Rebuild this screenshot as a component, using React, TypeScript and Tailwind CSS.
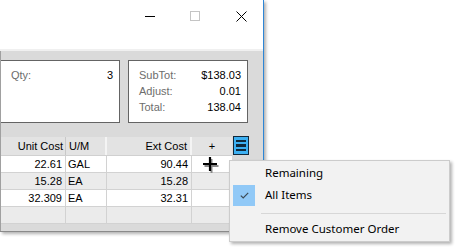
import React from 'react';

const rows = [
  { unit: '22.61', um: 'GAL', ext: '90.44', bg: 'bg-white' },
  { unit: '15.28', um: 'EA', ext: '15.28', bg: 'bg-[#ebebeb]' },
  { unit: '32.309', um: 'EA', ext: '32.31', bg: 'bg-white' },
  { unit: '', um: '', ext: '', bg: 'bg-[#ebebeb]' },
];

function TitleBar() {
  return (
    <div className="h-[49px] bg-white flex items-start">
      {/* minimize */}
      <div className="ml-[145px] mt-[16px] w-[10px] h-px bg-black" />
      {/* maximize (disabled) */}
      <div className="ml-[35px] mt-[11px] w-[10px] h-[10px] border border-[#c4c4c4]" />
      {/* close */}
      <svg className="ml-[36px] mt-[11px]" width="11" height="11" viewBox="0 0 11 11">
        <path d="M0.5 0.5 L10.5 10.5 M10.5 0.5 L0.5 10.5" stroke="#000" strokeWidth="1" />
      </svg>
    </div>
  );
}

function Grid() {
  return (
    <div className="flex items-start">
      <div className="w-[231px] text-[11px] text-black">
        {/* header */}
        <div className="flex h-[19px] bg-[#e3e3e3] border-b border-[#d0d0d0]">
          <div className="w-[65px] pr-[2px] flex items-center justify-end border-r border-[#c8c8c8]">Unit Cost</div>
          <div className="w-[41px] pl-[3px] flex items-center border-r-2 border-[#f4f4f4]">U/M</div>
          <div className="w-[85px] pr-[3px] flex items-center justify-end border-r-2 border-[#f4f4f4]">Ext Cost</div>
          <div className="w-[40px] flex items-center justify-center">+</div>
        </div>
        {rows.map((r, i) => (
          <div key={i} className={`flex h-[17px] border-b border-[#d2d2d2] ${r.bg}`}>
            <div className="w-[65px] pr-[3px] flex items-center justify-end border-r border-[#d2d2d2]">{r.unit}</div>
            <div className="w-[41px] pl-[2px] flex items-center border-r border-[#d2d2d2]">{r.um}</div>
            <div className="w-[85px] pr-[3px] flex items-center justify-end border-r border-[#d2d2d2]">{r.ext}</div>
            <div className="w-[40px]" />
          </div>
        ))}
      </div>
      {/* column chooser button */}
      <div className="ml-[1px] mt-[-1px] w-[16px] h-[19px] bg-[#3db0f2] border border-[#12283a] flex flex-col items-center justify-center gap-[2px]">
        <div className="w-[10px] h-[2.5px] bg-[#10293b]" />
        <div className="w-[10px] h-[2.5px] bg-[#10293b]" />
        <div className="w-[10px] h-[2.5px] bg-[#10293b]" />
      </div>
    </div>
  );
}

function ContextMenu() {
  return (
    <div
      className="absolute left-[229px] top-[160px] w-[221px] bg-[#f2f2f2] border border-[#cccccc] py-px px-px shadow-[2px_2px_3px_rgba(0,0,0,0.3)] text-[11.5px] text-black"
      style={{ fontFamily: '"Noto Sans", "Open Sans", sans-serif' }}
    >
      <div className="h-[22px] flex items-center pl-[34px]">Remaining</div>
      <div className="h-[22px] flex items-center">
        <div className="ml-[2px] w-[22px] h-[21px] bg-[#91c9f7] flex items-center justify-center">
          <svg width="9" height="7" viewBox="0 0 9 7">
            <path d="M0.8 3.6 L3.2 6 L8.2 0.8" fill="none" stroke="#3c4a55" strokeWidth="1.2" />
          </svg>
        </div>
        <span className="ml-[10px]">All Items</span>
      </div>
      <div className="h-[12px] pt-[7px] pl-[30px] pr-[2px]">
        <div className="h-px bg-[#d7d7d7]" />
      </div>
      <div className="h-[22px] flex items-center pl-[34px]">Remove Customer Order</div>
    </div>
  );
}

export default function App() {
  return (
    <div
      className="relative w-[457px] h-[250px] bg-white overflow-hidden"
      style={{ fontFamily: '"Liberation Sans", Arial, sans-serif' }}
    >
      <div className="w-[264px] h-[232px] border-r border-b border-r-[#2d86d6] border-b-[#8a8a8a] shadow-[2px_2px_3px_rgba(0,0,0,0.3)]">
        <TitleBar />
        <div className="h-[2px] bg-[#f0f0f0]" />
        <div className="h-[180px] bg-[#dadada] border-l border-[#a0a0a0] pt-[9px]">
          <div className="flex h-[63px]">
            <div className="w-[119px] bg-white border border-l-0 border-[#646464] pt-[8px] pr-[6px] pl-[10px] text-[11px] leading-[13px] flex justify-between">
              <span className="text-[#6d6d6d]">Qty:</span>
              <span className="text-black">3</span>
            </div>
            <div className="ml-[8px] w-[120px] bg-white border border-[#646464] pt-[6px] pl-[10px] pr-[6px] text-[11px] leading-[16px]">
              <div className="flex justify-between"><span className="text-[#6d6d6d]">SubTot:</span><span className="text-black">$138.03</span></div>
              <div className="flex justify-between"><span className="text-[#6d6d6d]">Adjust:</span><span className="text-black">0.01</span></div>
              <div className="flex justify-between"><span className="text-[#6d6d6d]">Total:</span><span className="text-black">138.04</span></div>
            </div>
          </div>
          <div className="mt-[14px]">
            <Grid />
          </div>
        </div>
      </div>

      {/* mouse cursor */}
      <svg className="absolute left-[203px] top-[157px]" width="16" height="16" viewBox="0 0 16 16">
        <path d="M7.5 1 V15 M0.5 8 H14.5" stroke="#8a8a8a" strokeWidth="2" transform="translate(1 1)" />
        <path d="M7 0 V14 M0 7 H14" stroke="#000" strokeWidth="2.2" />
      </svg>

      <ContextMenu />
    </div>
  );
}
